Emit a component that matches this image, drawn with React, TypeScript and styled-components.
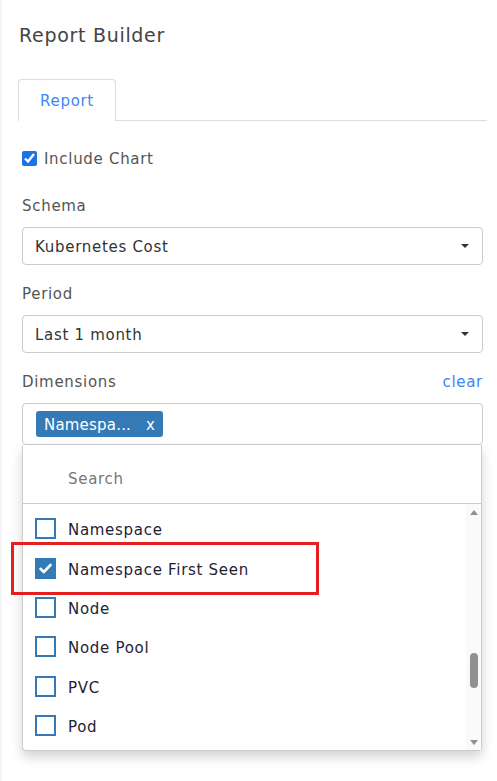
import React from 'react';
import styled, { createGlobalStyle } from 'styled-components';

const GlobalStyle = createGlobalStyle`
    html, body {
        margin: 0;
        padding: 0;
        background: #f4f5fa;
    }
    body {
        font-family: "DejaVu Sans", "Noto Sans", sans-serif;
        font-size: 15px;
        letter-spacing: 0.7px;
        color: #333;
    }
`;

const Panel = styled.div`
    margin-left: 2px;
    min-height: 781px;
    background: #fff;
    padding: 23px 10px 0 16px;
    box-sizing: border-box;
`;

const Title = styled.h1`
    margin: 0 0 32px 1px;
    font-size: 19px;
    line-height: 24px;
    font-weight: 400;
    letter-spacing: 0.7px;
    color: #444;
`;

const TabBar = styled.div`
    display: flex;
    border-bottom: 1px solid #ddd;
`;

const Tab = styled.div<{ active?: boolean }>`
    width: 96px;
    height: 40px;
    box-sizing: border-box;
    display: flex;
    align-items: center;
    justify-content: center;
    border: 1px solid #ddd;
    border-bottom: none;
    border-radius: 4px 4px 0 0;
    margin-bottom: -1px;
    background: #fff;
    color: ${p => (p.active ? '#3d85f6' : '#555')};
    padding-top: 1px;
    height: 42px;
    width: 98px;
`;

const Form = styled.div`
    padding: 0 4px;
`;

const CheckRow = styled.label`
    display: flex;
    align-items: center;
    gap: 7px;
    margin-top: 29px;
    height: 16px;
    color: #555;

    span {
        padding-top: 2px;
    }
`;

const NativeCheck = styled.input`
    width: 15px;
    height: 15px;
    margin: 0;
    accent-color: #1a73e8;
`;

const LabelRow = styled.div<{ first?: boolean }>`
    display: flex;
    justify-content: space-between;
    align-items: center;
    height: 20px;
    padding-top: 2px;
    margin-top: ${p => (p.first ? '28px' : '17px')};
    margin-bottom: 11px;
`;

const Label = styled.span`
    color: #555;
`;

const ClearLink = styled.span`
    color: #3d85f6;
`;

const Select = styled.div`
    height: 38px;
    box-sizing: border-box;
    border: 1px solid #ccc;
    border-radius: 4px;
    display: flex;
    align-items: center;
    justify-content: space-between;
    padding: 1px 13px 0 12px;
    color: #333;
`;

const Caret = styled.span`
    width: 0;
    height: 0;
    margin-top: -1px;
    border-left: 4px solid transparent;
    border-right: 4px solid transparent;
    border-top: 4px solid #333;
`;

const MultiBox = styled.div`
    height: 42px;
    box-sizing: border-box;
    border: 1px solid #ccc;
    border-radius: 4px;
    display: flex;
    align-items: center;
    padding: 0 13px;
`;

const Tag = styled.span`
    display: inline-flex;
    align-items: center;
    height: 26px;
    padding: 1px 8px 0;
    box-sizing: border-box;
    gap: 15px;
    background: #337ab7;
    color: #fff;
    border-radius: 3px;
    letter-spacing: 0.2px;
`;

const Dropdown = styled.div`
    position: relative;
    width: 460px;
    height: 306px;
    box-sizing: border-box;
    border: 1px solid #ccc;
    border-top: none;
    border-radius: 0 0 4px 4px;
    background: #fff;
    box-shadow: 0 6px 12px rgba(0, 0, 0, 0.175);
    display: flex;
    flex-direction: column;
`;

const SearchBox = styled.div`
    height: 59px;
    flex: none;
    box-sizing: border-box;
    border-bottom: 1px solid #ccc;
    display: flex;
    align-items: center;
    padding-left: 45px;
    padding-top: 9px;
    color: #777;
`;

const ListArea = styled.div`
    flex: 1;
    display: flex;
    min-height: 0;
`;

const List = styled.div`
    flex: 1;
    padding-top: 5px;
`;

const Item = styled.div`
    height: 39.4px;
    display: flex;
    align-items: center;
    gap: 12px;
    padding-left: 12px;
    color: #1f2233;

    span + span {
        padding-top: 3px;
    }
`;

const Box = styled.span<{ checked?: boolean }>`
    width: 21px;
    height: 21px;
    box-sizing: border-box;
    border: 2px solid #337ab7;
    background: ${p => (p.checked ? '#337ab7' : '#fff')};
    display: flex;
    align-items: center;
    justify-content: center;
`;

const ScrollTrack = styled.div`
    width: 15px;
    flex: none;
    background: #fafafa;
    display: flex;
    flex-direction: column;
    align-items: center;
    padding: 6px 0 5px;
    box-sizing: border-box;
`;

const Arrow = styled.span<{ down?: boolean }>`
    width: 0;
    height: 0;
    border-left: 4px solid transparent;
    border-right: 4px solid transparent;
    ${p => (p.down ? 'border-top: 5px solid #909090;' : 'border-bottom: 5px solid #909090;')}
`;

const Thumb = styled.div`
    width: 8px;
    height: 35px;
    border-radius: 4px;
    background: #909090;
    margin-top: 138px;
    margin-bottom: auto;
`;

const Highlight = styled.div`
    position: absolute;
    left: -12px;
    top: 97px;
    width: 308px;
    height: 53px;
    box-sizing: border-box;
    border: 3px solid #e3201f;
    pointer-events: none;
`;

const options = [
    { name: 'Namespace', checked: false },
    { name: 'Namespace First Seen', checked: true },
    { name: 'Node', checked: false },
    { name: 'Node Pool', checked: false },
    { name: 'PVC', checked: false },
    { name: 'Pod', checked: false },
];

const Check = () => (
    <svg width="13" height="11" viewBox="0 0 13 11">
        <path d="M1.5 5.8 L4.8 9 L11.5 2" fill="none" stroke="#fff" strokeWidth="2.6" strokeLinecap="round" strokeLinejoin="round" />
    </svg>
);

const App: React.FC = (): JSX.Element => {
    return (
        <>
            <GlobalStyle />
            <Panel>
                <Title>Report Builder</Title>
                <TabBar>
                    <Tab active>Report</Tab>
                </TabBar>
                <Form>
                    <CheckRow>
                        <NativeCheck type="checkbox" defaultChecked />
                        <span>Include Chart</span>
                    </CheckRow>

                    <LabelRow first><Label>Schema</Label></LabelRow>
                    <Select>Kubernetes Cost<Caret /></Select>

                    <LabelRow><Label>Period</Label></LabelRow>
                    <Select>Last 1 month<Caret /></Select>

                    <LabelRow>
                        <Label>Dimensions</Label>
                        <ClearLink>clear</ClearLink>
                    </LabelRow>
                    <MultiBox>
                        <Tag><span>Namespa...</span><span>x</span></Tag>
                    </MultiBox>
                    <Dropdown>
                        <SearchBox>Search</SearchBox>
                        <ListArea>
                            <List>
                                {options.map(o => (
                                    <Item key={o.name}>
                                        <Box checked={o.checked}>{o.checked && <Check />}</Box>
                                        <span>{o.name}</span>
                                    </Item>
                                ))}
                            </List>
                            <ScrollTrack>
                                <Arrow />
                                <Thumb />
                                <Arrow down />
                            </ScrollTrack>
                        </ListArea>
                        <Highlight />
                    </Dropdown>
                </Form>
            </Panel>
        </>
    );
};

export default App;
